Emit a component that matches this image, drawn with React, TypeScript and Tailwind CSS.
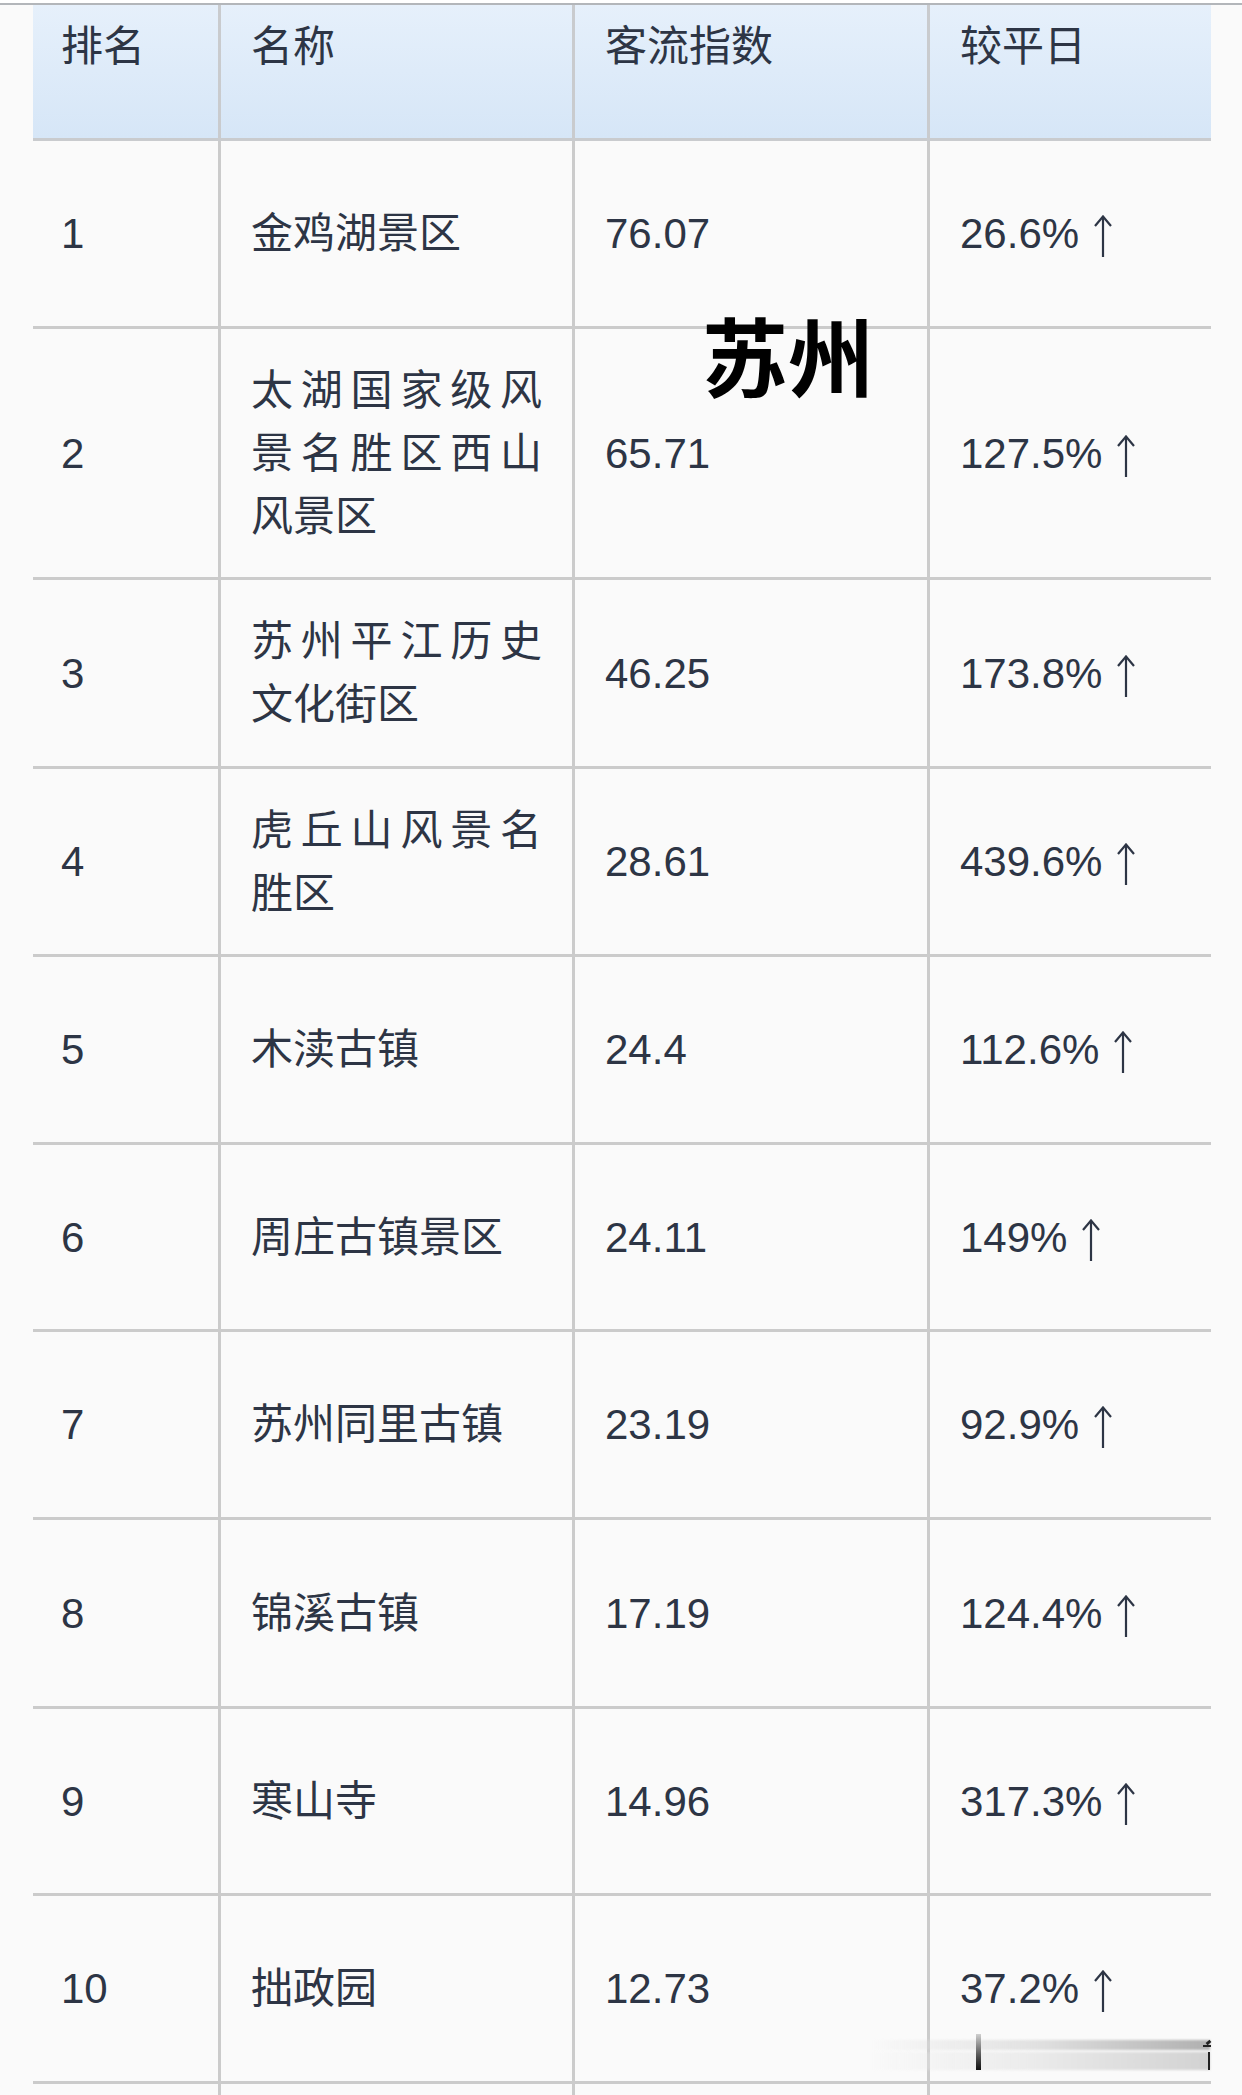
import React from "react";

type Row = { rank: string; name: string; idx: string; pct: string; h: string };

const rows: Row[] = [
  { rank: "1", name: "金鸡湖景区", idx: "76.07", pct: "26.6%", h: "h-[188px]" },
  { rank: "2", name: "太湖国家级风景名胜区西山风景区", idx: "65.71", pct: "127.5%", h: "h-[251px]" },
  { rank: "3", name: "苏州平江历史文化街区", idx: "46.25", pct: "173.8%", h: "h-[189px]" },
  { rank: "4", name: "虎丘山风景名胜区", idx: "28.61", pct: "439.6%", h: "h-[188px]" },
  { rank: "5", name: "木渎古镇", idx: "24.4", pct: "112.6%", h: "h-[188px]" },
  { rank: "6", name: "周庄古镇景区", idx: "24.11", pct: "149%", h: "h-[187px]" },
  { rank: "7", name: "苏州同里古镇", idx: "23.19", pct: "92.9%", h: "h-[188px]" },
  { rank: "8", name: "锦溪古镇", idx: "17.19", pct: "124.4%", h: "h-[189px]" },
  { rank: "9", name: "寒山寺", idx: "14.96", pct: "317.3%", h: "h-[187px]" },
  { rank: "10", name: "拙政园", idx: "12.73", pct: "37.2%", h: "h-[188px]" },
];

const font = { fontFamily: '"Liberation Sans", "Noto Sans CJK SC", sans-serif' };

function UpArrow() {
  return (
    <svg
      width="20"
      height="42"
      viewBox="0 0 20 42"
      className="inline-block ml-[2px] align-[-9px]"
      fill="none"
      stroke="#2d3545"
      strokeWidth="2.2"
      strokeLinecap="butt"
    >
      <path d="M10 1.5 V42" />
      <path d="M2 11 L10 1.5 L18 11" />
    </svg>
  );
}

export default function App() {
  return (
    <div
      className="relative w-[1242px] h-[2095px] overflow-hidden bg-[#fafafa] text-[#2d3545] text-[42px] leading-[63px]"
      style={font}
    >
      <div className="h-[3px] bg-white" />
      <div className="h-[2px] bg-[#b3b6ba]" />
      <div className="ml-[33px] w-[1178px]">
        {/* header */}
        <div className="grid grid-cols-[185px_354px_355px_284px] h-[136px] border-b-[3px] border-[#c9cbce] bg-gradient-to-b from-[#e6f0fb] to-[#d6e6f7]">
          <div className="pl-[28px] pr-[30px] pt-[10px]">排名</div>
          <div className="px-[30px] pt-[10px] border-l-[3px] border-[#c9cbce]">名称</div>
          <div className="px-[30px] pt-[10px] border-l-[3px] border-[#c9cbce]">客流指数</div>
          <div className="px-[30px] pt-[10px] border-l-[3px] border-[#c9cbce]">较平日</div>
        </div>
        {rows.map((r) => (
          <div
            key={r.rank}
            className={`grid grid-cols-[185px_354px_355px_284px] ${r.h} border-b-[3px] border-[#cbcbcb]`}
          >
            <div className="pl-[28px] pr-[30px] flex items-center">{r.rank}</div>
            <div className="px-[30px] flex items-center border-l-[3px] border-[#cbcbcb]">
              <div className="w-full text-justify">{r.name}</div>
            </div>
            <div className="px-[30px] flex items-center border-l-[3px] border-[#cbcbcb]">{r.idx}</div>
            <div className="px-[30px] flex items-center border-l-[3px] border-[#cbcbcb] whitespace-nowrap">
              <span>
                {r.pct} <UpArrow />
              </span>
            </div>
          </div>
        ))}
        <div className="grid grid-cols-[185px_354px_355px_284px] h-[60px]">
          <div />
          <div className="border-l-[3px] border-[#cbcbcb]" />
          <div className="border-l-[3px] border-[#cbcbcb]" />
          <div className="border-l-[3px] border-[#cbcbcb]" />
        </div>
      </div>

      {/* overlay watermark title */}
      <div
        className="absolute left-[702px] top-[311px] text-[86px] leading-none font-bold text-black"
        style={{ fontFamily: '"Noto Sans CJK SC", sans-serif' }}
      >
        苏州
      </div>

      {/* blurred watermark at bottom right */}
      <div className="absolute left-[870px] top-[2040px] w-[340px] h-[10px] bg-gradient-to-r from-transparent via-[#e0e0e0] to-[#b0b0b0] blur-[1px]" />
      <div className="absolute left-[870px] top-[2052px] w-[340px] h-[18px] bg-gradient-to-r from-transparent via-[#eaeaea] to-[#d2d2d2] blur-[1px]" />
      <div className="absolute left-[976px] top-[2034px] w-[5px] h-[36px] bg-gradient-to-b from-[#d0d0d0] to-[#111]" />
      <div className="absolute left-[1206px] top-[2041px] w-[5px] h-[3px] bg-[#222] rotate-[-40deg]" />
      <div className="absolute left-[1203px] top-[2045px] w-[8px] h-[2px] bg-[#222]" />
      <div className="absolute left-[1208px] top-[2052px] w-[2px] h-[18px] bg-[#222]" />
    </div>
  );
}
